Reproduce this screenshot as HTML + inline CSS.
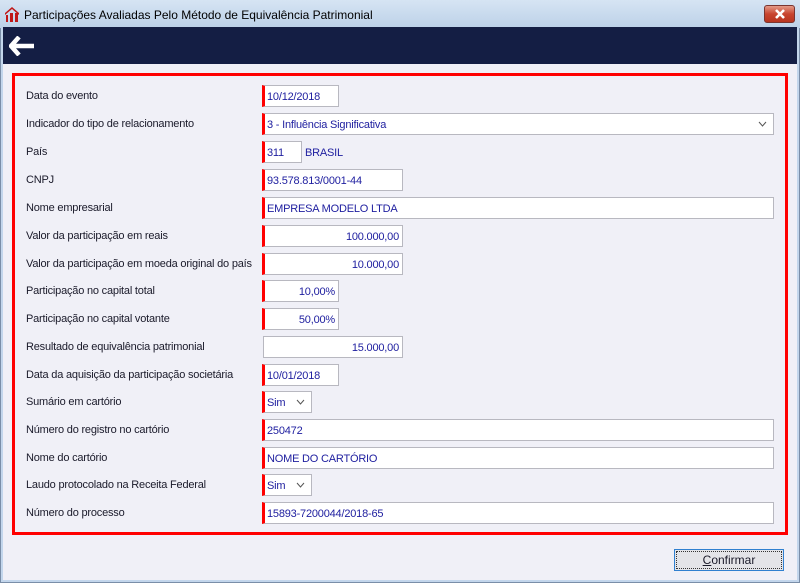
<!DOCTYPE html>
<html><head><meta charset="utf-8"><style>
*{margin:0;padding:0;box-sizing:border-box}
body{width:800px;height:583px;position:relative;overflow:hidden;background:#f0f0f7;font-family:"Liberation Sans",sans-serif;font-size:11px;color:#1a1a2a;letter-spacing:-0.2px}
.frame{position:absolute;left:0;top:0;width:800px;height:583px;border:1px solid #7a8ea8;background:#c3d6ec}
.title{position:absolute;left:0;top:0;width:800px;height:28px;background:linear-gradient(#d6e4f3,#bcd1e8)}
.title span{position:absolute;left:24px;top:8px;font-size:12px;color:#000;letter-spacing:0}
.close{position:absolute;left:764px;top:5px;width:31px;height:18px;border:1px solid #7a3530;border-radius:3px;background:linear-gradient(#e49a88,#c8452f 50%,#b83520)}
.nav{position:absolute;left:3px;top:27px;width:794px;height:37px;background:#141e44}
.body{position:absolute;left:3px;top:64px;width:794px;height:516px;background:#f0f0f7}
.red{position:absolute;left:12px;top:73px;width:776px;height:462px;border:3px solid #f00}
.lbl{position:absolute;left:26px;top:1px}
.in{position:absolute;height:22px;background:#fff;border:1px solid #b8b8c0;border-left:3px solid #f00;color:#2020a0;padding:5px 3px 0 2px;white-space:nowrap}
.in.r{text-align:right}
.in.nr{border-left:1px solid #b8b8c0}
.chev{position:absolute;right:6px;top:7px}
.btn{position:absolute;left:674px;top:549px;width:110px;height:22px;border:1px solid #3080d0;background:#e4e4e8;text-align:center;line-height:20px;font-size:12px;outline:1px dotted #333;outline-offset:-3px;letter-spacing:0}
</style></head><body>
<div class="frame"></div>
<div class="title">
<svg style="position:absolute;left:5px;top:7px" width="14" height="15" viewBox="0 0 14 15"><path d="M0 6 L7 0 L14 6 L14 8 L7 2 L0 8Z" fill="#c01818"/><rect x="1" y="8" width="2" height="7" fill="#c01818"/><rect x="5" y="6" width="3" height="9" fill="#c01818"/><rect x="10" y="6" width="3" height="9" fill="#c01818"/></svg>
<span>Participações Avaliadas Pelo Método de Equivalência Patrimonial</span>
<div class="close"><svg style="position:absolute;left:9px;top:3px" width="12" height="10" viewBox="0 0 12 10"><path d="M2 1 L10 9 M10 1 L2 9" stroke="#fff" stroke-width="2.6"/></svg></div></div>
<div class="nav"><svg style="position:absolute;left:6px;top:9px" width="26" height="20" viewBox="0 0 26 20"><path d="M10 1 L2 10 L10 19 M3 10 L25 10" stroke="#fff" stroke-width="4.5" fill="none"/></svg></div>
<div class="body"></div>
<div class="red"></div>

<div class="lbl" style="top:90px">Data do evento</div>
<div class="in" style="left:262px;top:85px;width:77px">10/12/2018</div>
<div class="lbl" style="top:118px">Indicador do tipo de relacionamento</div>
<div class="in" style="left:262px;top:113px;width:512px">3 - Influência Significativa<svg class="chev" width="9" height="6" viewBox="0 0 9 6"><path d="M1 1 L4.5 5 L8 1" stroke="#555" fill="none"/></svg></div>
<div class="lbl" style="top:146px">País</div>
<div class="in" style="left:262px;top:141px;width:40px">311</div>
<div style="position:absolute;left:305px;top:147px;color:#2020a0">BRASIL</div>
<div class="lbl" style="top:174px">CNPJ</div>
<div class="in" style="left:262px;top:169px;width:141px">93.578.813/0001-44</div>
<div class="lbl" style="top:202px">Nome empresarial</div>
<div class="in" style="left:262px;top:197px;width:512px">EMPRESA MODELO LTDA</div>
<div class="lbl" style="top:230px">Valor da participação em reais</div>
<div class="in r" style="left:262px;top:225px;width:141px">100.000,00</div>
<div class="lbl" style="top:258px">Valor da participação em moeda original do país</div>
<div class="in r" style="left:262px;top:253px;width:141px">10.000,00</div>
<div class="lbl" style="top:285px">Participação no capital total</div>
<div class="in r" style="left:262px;top:280px;width:77px">10,00%</div>
<div class="lbl" style="top:313px">Participação no capital votante</div>
<div class="in r" style="left:262px;top:308px;width:77px">50,00%</div>
<div class="lbl" style="top:341px">Resultado de equivalência patrimonial</div>
<div class="in r nr" style="left:263px;top:336px;width:140px">15.000,00</div>
<div class="lbl" style="top:369px">Data da aquisição da participação societária</div>
<div class="in" style="left:262px;top:364px;width:77px">10/01/2018</div>
<div class="lbl" style="top:396px">Sumário em cartório</div>
<div class="in" style="left:262px;top:391px;width:50px">Sim<svg class="chev" width="9" height="6" viewBox="0 0 9 6"><path d="M1 1 L4.5 5 L8 1" stroke="#555" fill="none"/></svg></div>
<div class="lbl" style="top:424px">Número do registro no cartório</div>
<div class="in" style="left:262px;top:419px;width:512px">250472</div>
<div class="lbl" style="top:452px">Nome do cartório</div>
<div class="in" style="left:262px;top:447px;width:512px">NOME DO CARTÓRIO</div>
<div class="lbl" style="top:479px">Laudo protocolado na Receita Federal</div>
<div class="in" style="left:262px;top:474px;width:50px">Sim<svg class="chev" width="9" height="6" viewBox="0 0 9 6"><path d="M1 1 L4.5 5 L8 1" stroke="#555" fill="none"/></svg></div>
<div class="lbl" style="top:507px">Número do processo</div>
<div class="in" style="left:262px;top:502px;width:512px">15893-7200044/2018-65</div>

<div class="btn"><u>C</u>onfirmar</div>
</body></html>
